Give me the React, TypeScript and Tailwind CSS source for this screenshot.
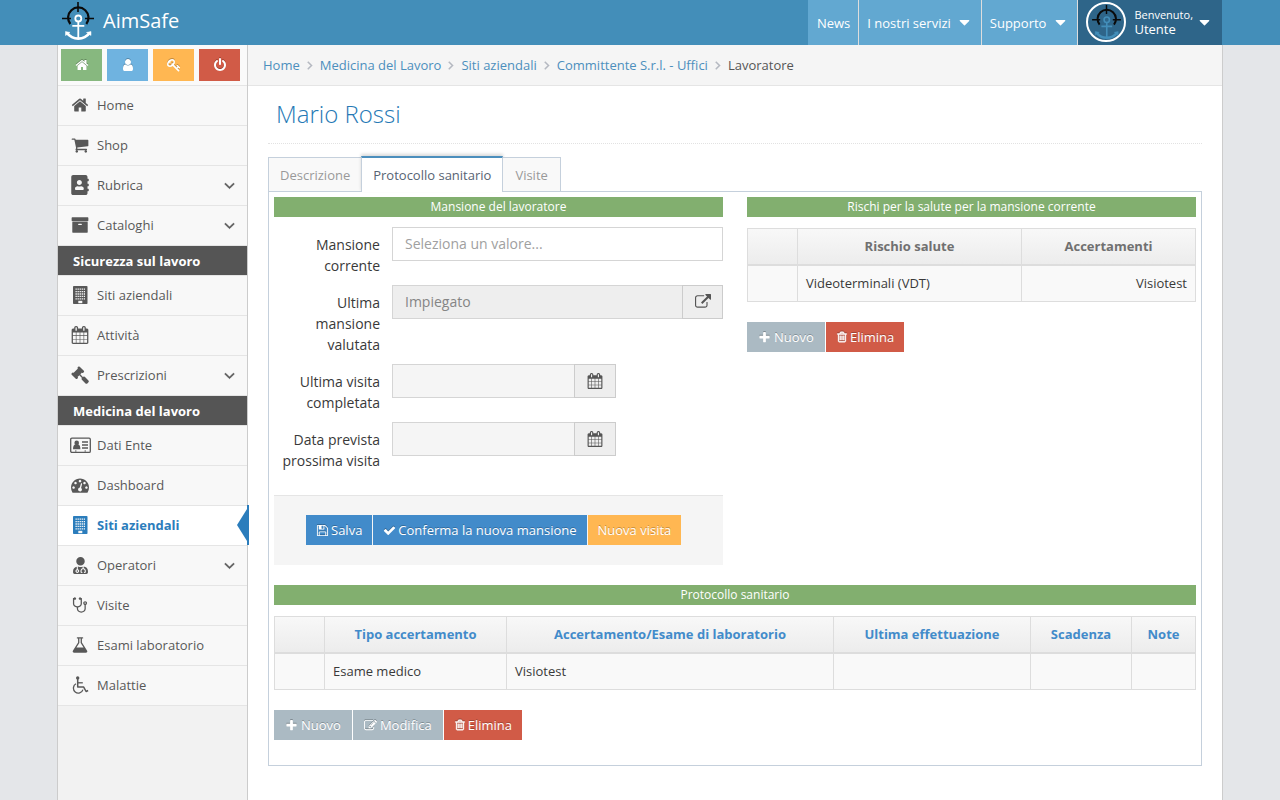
import React from 'react';
import { FaAddressBook, FaUserMd } from 'react-icons/fa';
import clsx from 'clsx';

const paths = {
  home: 'M1472 992v480q0 26-19 45t-45 19h-384v-384h-256v384h-384q-26 0-45-19t-19-45v-480q0-1 .5-3t.5-3l575-474 575 474q1 2 1 6zm223-69l-62 74q-8 9-21 11h-3q-13 0-21-7l-692-577-692 577q-12 8-24 7-13-2-21-11l-62-74q-8-10-7-23.5t11-21.5l719-599q32-26 76-26t76 26l244 204v-195q0-14 9-23t23-9h192q14 0 23 9t9 23v408l219 182q10 8 11 21.5t-7 23.5z',
  user: 'M1536 1399q0 109-62.5 187t-150.5 78h-854q-88 0-150.5-78t-62.5-187q0-85 8.5-160.5t31.5-152 58.5-131 94-89 134.5-34.5q131 128 313 128t313-128q76 0 134.5 34.5t94 89 58.5 131 31.5 152 8.5 160.5zm-256-887q0 159-112.5 271.5t-271.5 112.5-271.5-112.5-112.5-271.5 112.5-271.5 271.5-112.5 271.5 112.5 112.5 271.5z',
  key: 'M832 512q0-80-56-136t-136-56-136 56-56 136q0 42 19 83-41-19-83-19-80 0-136 56t-56 136 56 136 136 56 136-56 56-136q0-42-19-83 41 19 83 19 80 0 136-56t56-136zm851 704q0 17-49 66t-66 49q-9 0-28.5-16t-36.5-33-38.5-40-24.5-26l-96 96 220 220q28 28 28 68 0 42-39 81t-81 39q-40 0-68-28l-671-671q-176 131-365 131-163 0-265.5-102.5t-102.5-265.5q0-160 95-313t248-248 313-95q163 0 265.5 102.5t102.5 265.5q0 189-131 365l355 355 96-96q-3-3-26-24.5t-40-38.5-33-36.5-16-28.5q0-17 49-66t66-49q13 0 23 10 6 6 46 44.5t82 79.5 86.5 86 73 78 28.5 41z',
  power: 'M1664 896q0 156-61 298t-164 245-245 164-298 61-298-61-245-164-164-245-61-298q0-182 80.5-343t226.5-270q43-32 95.5-25t83.5 50q32 42 24.5 94.5t-49.5 84.5q-98 74-151.5 181t-53.5 228q0 104 40.5 198.5t109.5 163.5 163.5 109.5 198.5 40.5 198.5-40.5 163.5-109.5 109.5-163.5 40.5-198.5q0-121-53.5-228t-151.5-181q-42-32-49.5-84.5t24.5-94.5q31-43 84-50t95 25q146 109 226.5 270t80.5 343zm-640-768v640q0 52-38 90t-90 38-90-38-38-90v-640q0-52 38-90t90-38 90 38 38 90z',
  cart: 'M704 1536q0 52-38 90t-90 38-90-38-38-90 38-90 90-38 90 38 38 90zm896 0q0 52-38 90t-90 38-90-38-38-90 38-90 90-38 90 38 38 90zm128-1088v512q0 24-16.5 42.5t-40.5 21.5l-1044 122q13 60 13 70 0 16-24 64h920q26 0 45 19t19 45-19 45-45 19h-1024q-26 0-45-19t-19-45q0-11 8-31.5t16-36 21.5-40 15.5-29.5l-177-823h-204q-26 0-45-19t-19-45 19-45 45-19h256q16 0 28.5 6.5t19.5 15.5 13 24.5 8 26 5.5 29.5 4.5 26h1201q26 0 45 19t19 45z',
  archive: 'M1088 832q0-26-19-45t-45-19h-256q-26 0-45 19t-19 45 19 45 45 19h256q26 0 45-19t19-45zm576-192v960q0 26-19 45t-45 19h-1408q-26 0-45-19t-19-45v-960q0-26 19-45t45-19h1408q26 0 45 19t19 45zm64-448v256q0 26-19 45t-45 19h-1536q-26 0-45-19t-19-45v-256q0-26 19-45t45-19h1536q26 0 45 19t19 45z',
  calendar: 'M192 1664h288v-288h-288v288zm352 0h320v-288h-320v288zm-352-352h288v-320h-288v320zm352 0h320v-320h-320v320zm-352-384h288v-288h-288v288zm736 736h320v-288h-320v288zm-384-736h320v-288h-320v288zm768 736h288v-288h-288v288zm-384-352h320v-320h-320v320zm-352-864v-288q0-13-9.5-22.5t-22.5-9.5h-64q-13 0-22.5 9.5t-9.5 22.5v288q0 13 9.5 22.5t22.5 9.5h64q13 0 22.5-9.5t9.5-22.5zm736 864h288v-320h-288v320zm-384-384h320v-288h-320v288zm384 0h288v-288h-288v288zm32-480v-288q0-13-9.5-22.5t-22.5-9.5h-64q-13 0-22.5 9.5t-9.5 22.5v288q0 13 9.5 22.5t22.5 9.5h64q13 0 22.5-9.5t9.5-22.5zm384-64v1280q0 52-38 90t-90 38h-1408q-52 0-90-38t-38-90v-1280q0-52 38-90t90-38h128v-96q0-66 47-113t113-47h64q66 0 113 47t47 113v96h384v-96q0-66 47-113t113-47h64q66 0 113 47t47 113v96h128q52 0 90 38t38 90z',
  gavel: 'M1771 1536q0 53-37 90l-107 108q-39 37-91 37-53 0-90-37l-363-364q-38-36-38-90 0-53 43-96l-256-256-126 126q-14 14-34 14t-34-14q2 2 12.5 12t12.5 13 10 11.5 10 13.5 6 13.5 5.5 16.5 1.5 18q0 38-28 68-3 3-16.5 18t-19 20.5-18.5 16.5-22 15.5-22 9-26 4.5q-40 0-68-28l-408-408q-28-28-28-68 0-13 4.5-26t9-22 15.5-22 16.5-18.5 20.5-19 18-16.5q30-28 68-28 10 0 18 1.5t16.5 5.5 13.5 6 13.5 10 11.5 10 13 12.5 12 12.5q-14-14-14-34t14-34l348-348q14-14 34-14t34 14q-2-2-12.5-12t-12.5-13-10-11.5-10-13.5-6-13.5-5.5-16.5-1.5-18q0-38 28-68 3-3 16.5-18t19-20.5 18.5-16.5 22-15.5 22-9 26-4.5q40 0 68 28l408 408q28 28 28 68 0 13-4.5 26t-9 22-15.5 22-16.5 18.5-20.5 19-18 16.5q-30 28-68 28-10 0-18-1.5t-16.5-5.5-13.5-6-13.5-10-11.5-10-13-12.5-12-12.5q14 14 14 34t-14 34l-126 126 256 256q43-43 96-43 52 0 91 37l363 363q37 39 37 91z',
  dashboard: 'M384 1152q0-53-37.5-90.5t-90.5-37.5-90.5 37.5-37.5 90.5 37.5 90.5 90.5 37.5 90.5-37.5 37.5-90.5zm192-448q0-53-37.5-90.5t-90.5-37.5-90.5 37.5-37.5 90.5 37.5 90.5 90.5 37.5 90.5-37.5 37.5-90.5zm428 481l101-382q6-26-7.5-48.5t-38.5-29.5-48 6.5-30 39.5l-101 382q-60 5-107 43.5t-63 98.5q-20 77 20 146t117 89 146-20 89-117q16-60-6-117t-72-91zm660-33q0-53-37.5-90.5t-90.5-37.5-90.5 37.5-37.5 90.5 37.5 90.5 90.5 37.5 90.5-37.5 37.5-90.5zm-640-640q0-53-37.5-90.5t-90.5-37.5-90.5 37.5-37.5 90.5 37.5 90.5 90.5 37.5 90.5-37.5 37.5-90.5zm448 192q0-53-37.5-90.5t-90.5-37.5-90.5 37.5-37.5 90.5 37.5 90.5 90.5 37.5 90.5-37.5 37.5-90.5zm320 448q0 261-141 483-19 29-54 29h-1402q-35 0-54-29-141-221-141-483 0-182 71-348t191-286 286-191 348-71 348 71 286 191 191 286 71 348z',
  stethoscope: 'M1472 704q0-26-19-45t-45-19-45 19-19 45 19 45 45 19 45-19 19-45zm128 0q0 62-35.5 111t-92.5 70v395q0 159-131.5 271.5t-316.5 112.5-316.5-112.5-131.5-271.5v-132q-164-20-274-128t-110-252v-512q0-26 19-45t45-19q6 0 16 2 17-30 47-48t65-18q53 0 90.5 37.5t37.5 90.5-37.5 90.5-90.5 37.5q-33 0-64-18v402q0 106 94 181t226 75 226-75 94-181v-402q-31 18-64 18-53 0-90.5-37.5t-37.5-90.5 37.5-90.5 90.5-37.5q35 0 65 18t47 48q10-2 16-2 26 0 45 19t19 45v512q0 144-110 252t-274 128v132q0 106 94 181t226 75 226-75 94-181v-395q-57-21-92.5-70t-35.5-111q0-80 56-136t136-56 136 56 56 136z',
  flask: 'M1591 1448q56 89 21.5 152.5t-140.5 63.5h-1152q-106 0-140.5-63.5t21.5-152.5l503-793v-399h-64q-26 0-45-19t-19-45 19-45 45-19h512q26 0 45 19t19 45-19 45-45 19h-64v399zm-779-725l-272 429h712l-272-429-20-31v-436h-128v436z',
  angleDown: 'M1395 736q0 13-10 23l-466 466q-10 10-23 10t-23-10l-466-466q-10-10-10-23t10-23l50-50q10-10 23-10t23 10l393 393 393-393q10-10 23-10t23 10l50 50q10 10 10 23z',
  angleRight: 'M1171 960q0 13-10 23l-466 466q-10 10-23 10t-23-10l-50-50q-10-10-10-23t10-23l393-393-393-393q-10-10-10-23t10-23l50-50q10-10 23-10t23 10l466 466q10 10 10 23z',
  caretDown: 'M1408 704q0 26-19 45l-448 448q-19 19-45 19t-45-19l-448-448q-19-19-19-45t19-45 45-19h896q26 0 45 19t19 45z',
  external: 'M1408 928v320q0 119-84.5 203.5t-203.5 84.5h-832q-119 0-203.5-84.5t-84.5-203.5v-832q0-119 84.5-203.5t203.5-84.5h704q14 0 23 9t9 23v64q0 14-9 23t-23 9h-704q-66 0-113 47t-47 113v832q0 66 47 113t113 47h832q66 0 113-47t47-113v-320q0-14 9-23t23-9h64q14 0 23 9t9 23zm384-864v512q0 26-19 45t-45 19-45-19l-176-176-652 652q-10 10-23 10t-23-10l-114-114q-10-10-10-23t10-23l652-652-176-176q-19-19-19-45t19-45 45-19h512q26 0 45 19t19 45z',
  save: 'M512 1536h768v-384h-768v384zm896 0h128v-896q0-14-10-38.5t-20-34.5l-281-281q-10-10-34-20t-39-10v416q0 40-28 68t-68 28h-576q-40 0-68-28t-28-68v-416h-128v1280h128v-416q0-40 28-68t68-28h832q40 0 68 28t28 68v416zm-384-928v-320q0-13-9.5-22.5t-22.5-9.5h-192q-13 0-22.5 9.5t-9.5 22.5v320q0 13 9.5 22.5t22.5 9.5h192q13 0 22.5-9.5t9.5-22.5zm640 32v928q0 40-28 68t-68 28h-1344q-40 0-68-28t-28-68v-1344q0-40 28-68t68-28h928q40 0 88 20t76 48l280 280q28 28 48 76t20 88z',
  check: 'M1671 566q0 40-28 68l-724 724-136 136q-28 28-68 28t-68-28l-136-136-362-362q-28-28-28-68t28-68l136-136q28-28 68-28t68 28l294 295 656-657q28-28 68-28t68 28l136 136q28 28 28 68z',
  plus: 'M1600 736v192q0 40-28 68t-68 28h-416v416q0 40-28 68t-68 28h-192q-40 0-68-28t-28-68v-416h-416q-40 0-68-28t-28-68v-192q0-40 28-68t68-28h416v-416q0-40 28-68t68-28h192q40 0 68 28t28 68v416h416q40 0 68 28t28 68z',
  trash: 'M704 736v576q0 14-9 23t-23 9h-64q-14 0-23-9t-9-23v-576q0-14 9-23t23-9h64q14 0 23 9t9 23zm256 0v576q0 14-9 23t-23 9h-64q-14 0-23-9t-9-23v-576q0-14 9-23t23-9h64q14 0 23 9t9 23zm256 0v576q0 14-9 23t-23 9h-64q-14 0-23-9t-9-23v-576q0-14 9-23t23-9h64q14 0 23 9t9 23zm128 724v-948h-896v948q0 22 7 40.5t14.5 27 10.5 8.5h832q3 0 10.5-8.5t14.5-27 7-40.5zm-672-1076h448l-48-117q-7-9-17-11h-317q-10 2-17 11zm928 32v64q0 14-9 23t-23 9h-96v948q0 83-47 143.5t-113 60.5h-832q-66 0-113-58.5t-47-141.5v-952h-96q-14 0-23-9t-9-23v-64q0-14 9-23t23-9h309l70-167q15-37 54-63t79-26h320q40 0 79 26t54 63l70 167h309q14 0 23 9t9 23z',
  edit: 'M888 1184l116-116-152-152-116 116v56h96v96h56zm440-720q-16-16-33 1l-350 350q-17 17-1 33t33-1l350-350q17-17 1-33zm80 594v190q0 119-84.5 203.5t-203.5 84.5h-832q-119 0-203.5-84.5t-84.5-203.5v-832q0-119 84.5-203.5t203.5-84.5h832q63 0 117 25 15 7 18 23 3 17-9 29l-49 49q-14 14-32 8-23-6-45-6h-832q-66 0-113 47t-47 113v832q0 66 47 113t113 47h832q66 0 113-47t47-113v-126q0-13 9-22l64-64q15-15 35-7t20 29zm-96-738l288 288-672 672h-288v-288zm444 132l-92 92-288-288 92-92q28-28 68-28t68 28l152 152q28 28 28 68t-28 68z',
};

type IconName = keyof typeof paths;

const Icon: React.FC<{ name: IconName; className?: string }> = ({ name, className }) => (
  <svg viewBox="0 0 1792 1792" fill="currentColor" aria-hidden="true" className={clsx('shrink-0 overflow-visible', className)}>
    <path d={paths[name]} />
  </svg>
);

const BuildingIcon = () => (
  <svg viewBox="0 0 18 20" className="h-5 w-[18px]" aria-hidden="true">
    <rect x="2" y="1" width="14.5" height="18" rx="0.8" fill="currentColor" />
    <path
      d="M4.5 4.2H14M4.5 6.6H14M4.5 9H14M4.5 11.4H14M4.5 13.8H14"
      stroke="#f8f8f8"
      strokeWidth="1.3"
      strokeDasharray="1.3 0.75"
    />
    <rect x="7.3" y="15.8" width="4" height="2.4" fill="#f8f8f8" />
  </svg>
);

const CardIcon = () => (
  <svg viewBox="0 0 21 17" className="h-[17px] w-[21px] shrink-0" aria-hidden="true">
    <rect x="0.7" y="1.2" width="19.6" height="14.2" rx="1.2" fill="none" stroke="currentColor" strokeWidth="1.3" />
    <circle cx="6.7" cy="5.9" r="2.3" fill="currentColor" />
    <path d="M3 12.2c0-3 1-4.6 2-4.8 1 .8 2.4.8 3.4 0 1 .2 2 1.8 2 4.8z" fill="currentColor" />
    <path d="M12 5h6M12 8h6M12 11h6" stroke="currentColor" strokeWidth="1.3" />
    <path d="M5 14h1.5M14.5 14H16" stroke="currentColor" strokeWidth="1.2" />
  </svg>
);

const WheelchairIcon = () => (
  <svg viewBox="0 0 18 18" className="size-[18px]" fill="none" stroke="currentColor" strokeWidth="1.3" aria-hidden="true">
    <circle cx="6.7" cy="1.9" r="1.7" fill="currentColor" stroke="none" />
    <path d="M6.7 3v8.1h6l2.4 4.4 2-1" strokeWidth="1.5" strokeLinejoin="round" />
    <path d="M7 6.8h4.8" />
    <path d="M5 7.8a4.9 4.9 0 1 0 7 5.8" />
  </svg>
);

const Logo: React.FC<{ anchor: string; className: string }> = ({ anchor, className }) => (
  <svg viewBox="0 0 34 40" className={className} fill="none" aria-hidden="true">
    <g stroke="#0a0a0a">
      <path d="M9.3 23A10.2 10.2 0 1 1 25.3 23" strokeWidth="2.2" />
      <path d="M17 1v10M1 17.5h9M24 17.5h9" strokeWidth="1.6" />
    </g>
    <g stroke={anchor}>
      <circle cx="17.3" cy="17.5" r="3" strokeWidth="1.8" />
      <path d="M17.3 20.5V37M11.3 24.8h12" strokeWidth="1.8" />
      <path d="M6 32c3 4 6.5 5.6 11.3 5.6S25.6 36 28.6 32" strokeWidth="2.8" />
      <path d="M4.5 34.5V30.5L9 31.5zM30 34.5V30.5L25.5 31.5z" fill={anchor} strokeWidth="0.5" />
    </g>
  </svg>
);

const shortcuts: { icon: IconName; label: string; color: string }[] = [
  { icon: 'home', label: 'Home', color: 'bg-[#87b87f]' },
  { icon: 'user', label: 'Profilo', color: 'bg-[#6fb3e0]' },
  { icon: 'key', label: 'Password', color: 'bg-[#ffb752]' },
  { icon: 'power', label: 'Esci', color: 'bg-[#d15b47]' },
];

interface MenuItem {
  label: string;
  icon: React.ReactNode;
  expandable?: boolean;
  active?: boolean;
}

const menuIcon = (name: IconName) => <Icon name={name} className="size-[18px]" />;

const menu: { title?: string; items: MenuItem[] }[] = [
  {
    items: [
      { label: 'Home', icon: menuIcon('home') },
      { label: 'Shop', icon: menuIcon('cart') },
      { label: 'Rubrica', icon: <FaAddressBook className="size-5" />, expandable: true },
      { label: 'Cataloghi', icon: menuIcon('archive'), expandable: true },
    ],
  },
  {
    title: 'Sicurezza sul lavoro',
    items: [
      { label: 'Siti aziendali', icon: <BuildingIcon /> },
      { label: 'Attività', icon: menuIcon('calendar') },
      { label: 'Prescrizioni', icon: menuIcon('gavel'), expandable: true },
    ],
  },
  {
    title: 'Medicina del lavoro',
    items: [
      { label: 'Dati Ente', icon: <CardIcon /> },
      { label: 'Dashboard', icon: menuIcon('dashboard') },
      { label: 'Siti aziendali', icon: <BuildingIcon />, active: true },
      { label: 'Operatori', icon: <FaUserMd className="size-[17px]" />, expandable: true },
      { label: 'Visite', icon: menuIcon('stethoscope') },
      { label: 'Esami laboratorio', icon: menuIcon('flask') },
      { label: 'Malattie', icon: <WheelchairIcon /> },
    ],
  },
];

const crumbs = ['Home', 'Medicina del Lavoro', 'Siti aziendali', 'Committente S.r.l. - Uffici'];

const Navbar = () => (
  <header className="bg-[#438eb9] text-white">
    <div className="mx-auto flex h-[45px] max-w-[1166px] justify-between pl-1 pr-px">
      <a href="#" className="flex items-center pb-1 text-xl">
        <Logo anchor="#ffffff" className="h-10 w-[34px]" />
        <span className="ml-2">AimSafe</span>
      </a>
      <nav className="flex">
        <a href="#" className="flex items-center bg-[#62a8d1] pl-[9px] pr-2">News</a>
        <a href="#" className="flex items-center border-l border-[#ddd] bg-[#62a8d1] px-2">
          I nostri servizi
          <Icon name="caretDown" className="ml-[5px] size-[17px]" />
        </a>
        <a href="#" className="flex items-center border-l border-[#ddd] bg-[#62a8d1] px-2">
          Supporto
          <Icon name="caretDown" className="ml-1.5 size-[17px]" />
        </a>
        <a href="#" className="flex items-center border-l border-[#ddd] bg-[#2e6589] pl-2 pr-[9px] pb-px">
          <span className="flex size-10 items-center justify-center rounded-full border-2 border-white">
            <Logo anchor="#438eb9" className="h-9 w-[31px]" />
          </span>
          <span className="ml-2 flex flex-col leading-[15px]">
            <span className="text-[11px]">Benvenuto,</span>
            <span>Utente</span>
          </span>
          <Icon name="caretDown" className="ml-[3px] size-[17px]" />
        </a>
      </nav>
    </div>
  </header>
);

const SidebarItem: React.FC<{ item: MenuItem }> = ({ item }) => (
  <li className="relative border-t border-[#e5e5e5]">
    <a
      href="#"
      className={clsx(
        'flex h-[39px] items-center pb-px pr-[9px]',
        item.active ? 'bg-white font-bold text-[#2b7dbc]' : 'bg-[#f8f8f8] text-[#585858]'
      )}
    >
      <span className="flex w-[39px] shrink-0 justify-center pl-[5px]">{item.icon}</span>
      <span className="flex-1">{item.label}</span>
      {item.expandable && <Icon name="angleDown" className="size-[17px] stroke-current stroke-[60]" />}
    </a>
    {item.active && (
      <svg viewBox="0 0 12 40" className="absolute -right-0.5 -top-px h-10 w-3" fill="#2b7dbc" aria-hidden="true">
        <path d="M10 4L0 20L10 36zM10 0h2v40h-2z" />
      </svg>
    )}
  </li>
);

const Sidebar = () => (
  <aside className="w-[190px] shrink-0 border-r border-[#ccc] bg-[#f2f2f2]">
    <div className="flex h-10 items-center gap-[5px] bg-[#fafafa] px-[3px]">
      {shortcuts.map((s) => (
        <button
          key={s.label}
          aria-label={s.label}
          className={clsx('flex h-8 w-[41px] items-center justify-center text-white', s.color)}
        >
          <Icon name={s.icon} className="size-3.5 drop-shadow-[0_-1px_0_rgba(0,0,0,0.25)]" />
        </button>
      ))}
    </div>
    {menu.map((group, i) => (
      <div key={i}>
        {group.title && (
          <h2 className="flex h-[30px] items-center border-t border-[#e5e5e5] bg-[#555] pl-[15px] font-bold text-white">
            {group.title}
          </h2>
        )}
        <ul>
          {group.items.map((item) => (
            <SidebarItem key={item.label} item={item} />
          ))}
        </ul>
      </div>
    ))}
    <div className="border-t border-[#e5e5e5]" />
  </aside>
);

const Breadcrumbs = () => (
  <nav aria-label="Breadcrumb" className="border-b border-[#e5e5e5] bg-[#f5f5f5]">
    <ol className="flex h-10 items-center pl-[15px]">
      {crumbs.map((c) => (
        <li key={c} className="flex items-center">
          <a href="#" className="text-[#4c8fbd]">{c}</a>
          <Icon name="angleRight" className="mx-[3px] size-3.5 stroke-current stroke-[60] text-[#b2b6bf]" />
        </li>
      ))}
      <li className="text-[#555]">Lavoratore</li>
    </ol>
  </nav>
);

const SectionTitle: React.FC<{ children: React.ReactNode }> = ({ children }) => (
  <h2 className="h-5 bg-[#82af6f] text-center text-xs leading-5 text-white">{children}</h2>
);

const buttonColors = {
  blue: 'bg-[#428bca]',
  orange: 'bg-[#ffb752]',
  grey: 'bg-[#abbac3]',
  red: 'bg-[#d15b47]',
};

const ActionButton: React.FC<{ color: keyof typeof buttonColors; icon?: IconName; label: string }> = ({ color, icon, label }) => (
  <button
    className={clsx(
      'flex h-[30px] items-center text-white [text-shadow:0_-1px_0_rgba(0,0,0,0.25)]',
      color === 'grey' ? 'gap-[3px] px-[11px]' : 'gap-0.5 px-2.5',
      buttonColors[color]
    )}
  >
    {icon && (
      <Icon
        name={icon}
        className={clsx(
          'drop-shadow-[0_-1px_0_rgba(0,0,0,0.25)]',
          icon === 'trash' ? 'size-3 stroke-current stroke-[70]' : 'size-[13px]'
        )}
      />
    )}
    {label}
  </button>
);

interface FieldProps {
  id: string;
  label: string;
  value?: string;
  placeholder?: string;
  addon?: IconName;
  short?: boolean;
}

const Field: React.FC<FieldProps> = ({ id, label, value, placeholder, addon, short }) => (
  <div className="flex items-start gap-3 pb-[9px] text-sm">
    <label htmlFor={id} className="w-[106px] shrink-0 pt-[7px] text-right leading-[21px] text-[#393939]">{label}</label>
    <div className={clsx('flex h-[34px]', short ? 'w-56' : 'flex-1')}>
      <input
        id={id}
        type="text"
        defaultValue={value}
        placeholder={placeholder}
        readOnly={Boolean(addon)}
        className={clsx(
          'min-w-0 flex-1 border border-[#d5d5d5] px-3 text-[#858585] placeholder:text-[#a0a0a0]',
          !addon && 'bg-white',
          addon && (short ? 'border-r-0 bg-[#f5f5f5]' : 'border-r-0 bg-[#eee]')
        )}
      />
      {addon && (
        <button
          aria-label={label}
          className={clsx('flex items-center justify-center border border-[#ccc] bg-[#eee] text-[#555]', short ? 'w-[42px]' : 'w-[41px]')}
        >
          <Icon name={addon} className="size-4" />
        </button>
      )}
    </div>
  </div>
);

interface Column {
  label: string;
  width: string;
  right?: boolean;
}

const DataTable: React.FC<{ columns: Column[]; row: string[]; sortable?: boolean }> = ({ columns, row, sortable }) => (
  <table className="mt-[11px] w-full table-fixed border-collapse border border-[#ddd]">
    <thead>
      <tr className="h-9 bg-linear-to-b from-[#f8f8f8] to-[#ececec]">
        {columns.map((c, i) => (
          <th
            key={i}
            className={clsx('border border-b-2 border-[#ddd] px-2 font-bold', c.width, sortable ? 'text-[#428bca]' : 'text-[#707070]')}
          >
            {sortable && c.label ? <a href="#">{c.label}</a> : c.label}
          </th>
        ))}
      </tr>
    </thead>
    <tbody>
      <tr className="h-[37px] bg-[#f9f9f9] text-[#393939]">
        {row.map((cell, i) => (
          <td key={i} className={clsx('border border-[#ddd] px-2', columns[i].right && 'text-right')}>{cell}</td>
        ))}
      </tr>
    </tbody>
  </table>
);

const Tabs = () => (
  <div role="tablist" className="flex h-9 items-end">
    <button role="tab" aria-selected="false" className="h-[35px] border border-[#c5d0dc] border-r-0 bg-[#f9f9f9] px-[11px] text-[#999]">
      Descrizione
    </button>
    <button
      role="tab"
      aria-selected="true"
      className="h-9 border-x border-t-2 border-x-[#c5d0dc] border-t-[#4c8fbd] bg-white px-[11px] text-[#576373] shadow-[0_-2px_3px_0_rgba(0,0,0,0.15)]"
    >
      Protocollo sanitario
    </button>
    <button role="tab" aria-selected="false" className="h-[35px] border border-l-0 border-[#c5d0dc] bg-[#f9f9f9] px-3 text-[#999]">
      Visite
    </button>
  </div>
);

export default function App() {
  return (
    <div className="flex min-h-screen flex-col bg-[#e4e6e9] font-['Open_Sans',sans-serif] text-[13px] leading-5 text-[#393939]">
      <Navbar />
      <div className="mx-auto flex w-full max-w-[1166px] flex-1 border-x border-[#ccc] bg-white">
        <Sidebar />
        <div className="min-w-0 flex-1">
          <Breadcrumbs />
          <main className="px-5 pb-6 pt-2">
            <h1 className="border-b border-dotted border-[#e2e2e2] px-2 pb-3.5 pt-[5px] text-2xl leading-[30px] font-light text-[#2679b5]">
              Mario Rossi
            </h1>
            <div className="pt-3">
              <Tabs />
              <div className="-mt-px border border-[#c5d0dc] px-[5px] pb-[25px] pt-[5px]">
                <div className="grid grid-cols-2 gap-6">
                  <section>
                    <SectionTitle>Mansione del lavoratore</SectionTitle>
                    <form className="pt-2.5" onSubmit={(e) => e.preventDefault()}>
                      <Field id="mansione" label="Mansione corrente" placeholder="Seleziona un valore..." />
                      <Field id="ultima-mansione" label="Ultima mansione valutata" value="Impiegato" addon="external" />
                      <Field id="ultima-visita" label="Ultima visita completata" addon="calendar" short />
                      <Field id="prossima-visita" label="Data prevista prossima visita" addon="calendar" short />
                      <div className="mt-[15px] flex gap-px border-t border-[#e5e5e5] bg-[#f5f5f5] pb-5 pl-8 pt-[19px]">
                        <ActionButton color="blue" icon="save" label="Salva" />
                        <ActionButton color="blue" icon="check" label="Conferma la nuova mansione" />
                        <ActionButton color="orange" label="Nuova visita" />
                      </div>
                    </form>
                  </section>
                  <section>
                    <SectionTitle>Rischi per la salute per la mansione corrente</SectionTitle>
                    <DataTable
                      columns={[
                        { label: '', width: 'w-[50px]' },
                        { label: 'Rischio salute', width: 'w-[224px]' },
                        { label: 'Accertamenti', width: 'w-[174px]', right: true },
                      ]}
                      row={['', 'Videoterminali (VDT)', 'Visiotest']}
                    />
                    <div className="mt-5 flex gap-px">
                      <ActionButton color="grey" icon="plus" label="Nuovo" />
                      <ActionButton color="red" icon="trash" label="Elimina" />
                    </div>
                  </section>
                </div>
                <section className="pt-5">
                  <SectionTitle>Protocollo sanitario</SectionTitle>
                  <DataTable
                    sortable
                    columns={[
                      { label: '', width: 'w-[50px]' },
                      { label: 'Tipo accertamento', width: 'w-[182px]' },
                      { label: 'Accertamento/Esame di laboratorio', width: 'w-[327px]' },
                      { label: 'Ultima effettuazione', width: 'w-[197px]' },
                      { label: 'Scadenza', width: 'w-[101px]' },
                      { label: 'Note', width: 'w-[64px]' },
                    ]}
                    row={['', 'Esame medico', 'Visiotest', '', '', '']}
                  />
                  <div className="mt-5 flex gap-px">
                    <ActionButton color="grey" icon="plus" label="Nuovo" />
                    <ActionButton color="grey" icon="edit" label="Modifica" />
                    <ActionButton color="red" icon="trash" label="Elimina" />
                  </div>
                </section>
              </div>
            </div>
          </main>
        </div>
      </div>
    </div>
  );
}
